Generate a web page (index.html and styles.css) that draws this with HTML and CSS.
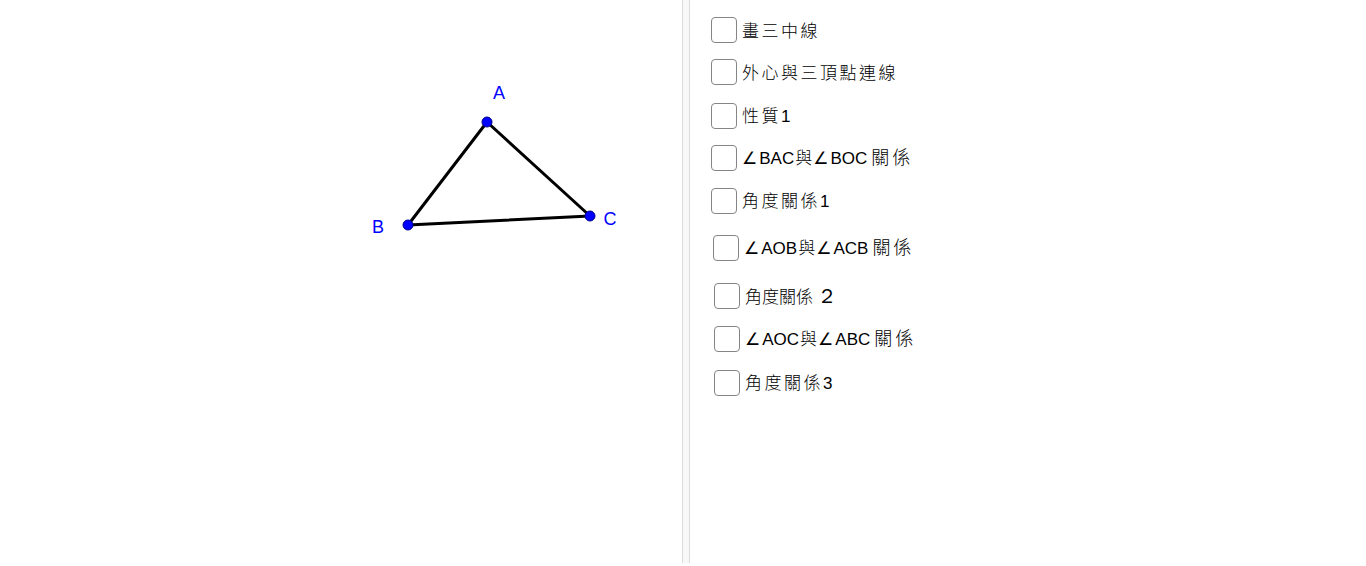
FILE: index.html
```html
<!DOCTYPE html>
<html lang="zh-Hant">
<head>
<meta charset="utf-8">
<title>外心性質</title>
<link rel="stylesheet" href="styles.css">
</head>
<body>
<div class="app">
  <div class="graphics">
    <svg class="canvas" width="682" height="566" viewBox="0 0 682 566" xmlns="http://www.w3.org/2000/svg">
      <polygon points="487,122 408,225 590,216" fill="none" stroke="#000" stroke-width="3" stroke-linejoin="round"/>
      <circle cx="487" cy="122" r="5" fill="#0000ff" stroke="#00008a" stroke-width="1"/>
      <circle cx="408" cy="225" r="5" fill="#0000ff" stroke="#00008a" stroke-width="1"/>
      <circle cx="590" cy="216" r="5" fill="#0000ff" stroke="#00008a" stroke-width="1"/>
      <text class="pt" x="499" y="99" text-anchor="middle">A</text>
      <text class="pt" x="378" y="233" text-anchor="middle">B</text>
      <text class="pt" x="610" y="225" text-anchor="middle">C</text>
    </svg>
  </div>
  <div class="divider"></div>
  <div class="panel">
    <ul class="list">
      <li class="row r1"><span class="box"></span><span class="label"><span class="cjk">畫三中線</span></span></li>
      <li class="row r2"><span class="box"></span><span class="label"><span class="cjk">外心與三頂點連線</span></span></li>
      <li class="row r3"><span class="box"></span><span class="label"><span class="cjk">性質</span>1</span></li>
      <li class="row r4"><span class="box"></span><span class="label"><span class="ang">∠</span>BAC<span class="cjk mid">與</span><span class="ang">∠</span>BOC<span class="cjk tail">關係</span></span></li>
      <li class="row r5"><span class="box"></span><span class="label"><span class="cjk">角度關係</span>1</span></li>
      <li class="row r6"><span class="box"></span><span class="label"><span class="ang">∠</span>AOB<span class="cjk mid">與</span><span class="ang">∠</span>ACB<span class="cjk tail">關係</span></span></li>
      <li class="row r7"><span class="box"></span><span class="label"><span class="cjk tight">角度關係</span><span class="fw">２</span></span></li>
      <li class="row r8"><span class="box"></span><span class="label"><span class="ang">∠</span>AOC<span class="cjk mid">與</span><span class="ang">∠</span>ABC<span class="cjk tail">關係</span></span></li>
      <li class="row r9"><span class="box"></span><span class="label"><span class="cjk">角度關係</span>3</span></li>
    </ul>
  </div>
</div>
</body>
</html>
```

FILE: styles.css
```css
html, body {
  margin: 0;
  padding: 0;
  background: #ffffff;
}

body {
  font-family: "Liberation Sans", Arial, "Noto Sans CJK TC", sans-serif;
  color: #000;
  overflow: hidden;
}

.app {
  display: flex;
  width: 1366px;
  height: 566px;
}

.graphics {
  width: 682px;
  height: 566px;
  flex: none;
}

.canvas {
  display: block;
}

.pt {
  font-family: "Liberation Sans", Arial, sans-serif;
  font-size: 18px;
  fill: #0000ff;
}

.divider {
  flex: none;
  width: 6px;
  height: 563px;
  background: #f8f8f8;
  border-left: 1px solid #dcdcdc;
  border-right: 1px solid #dcdcdc;
}

.panel {
  flex: 1;
  padding-left: 21px;
}

.list {
  list-style: none;
  margin: 0;
  padding: 0;
  display: flex;
  flex-direction: column;
}

.row {
  display: flex;
  align-items: center;
  height: 27px;
}

.box {
  flex: none;
  width: 24px;
  height: 24px;
  border: 1.5px solid #858585;
  border-radius: 4px;
  background: #fff;
}

.label {
  margin-left: 5px;
  font-size: 17px;
  line-height: 20px;
  white-space: nowrap;
  display: flex;
  align-items: baseline;
}

.cjk {
  font-family: "Noto Sans CJK TC", sans-serif;
  font-size: 17px;
  font-weight: 300;
  letter-spacing: 2.5px;
}

.cjk.tight {
  letter-spacing: 0;
}

.cjk.mid {
  margin-left: 1px;
  letter-spacing: 1px;
}

.cjk.tail {
  margin-left: 4px;
  font-size: 18px;
  letter-spacing: 3px;
}

.ang {
  font-family: "DejaVu Sans", sans-serif;
  font-size: 17px;
  margin-right: 2px;
}

.fw {
  font-family: "Liberation Serif", serif;
  font-size: 20px;
  margin-left: 4px;
}

.r1 { margin-top: 16px; }
.r2 { margin-top: 15px; }
.r3 { margin-top: 17px; }
.r4 { margin-top: 15px; }
.r5 { margin-top: 16px; }
.r6 { margin-top: 20px; margin-left: 2px; }
.r7 { margin-top: 21px; margin-left: 3px; }
.r8 { margin-top: 16px; margin-left: 3px; }
.r9 { margin-top: 17px; margin-left: 3px; }
```
